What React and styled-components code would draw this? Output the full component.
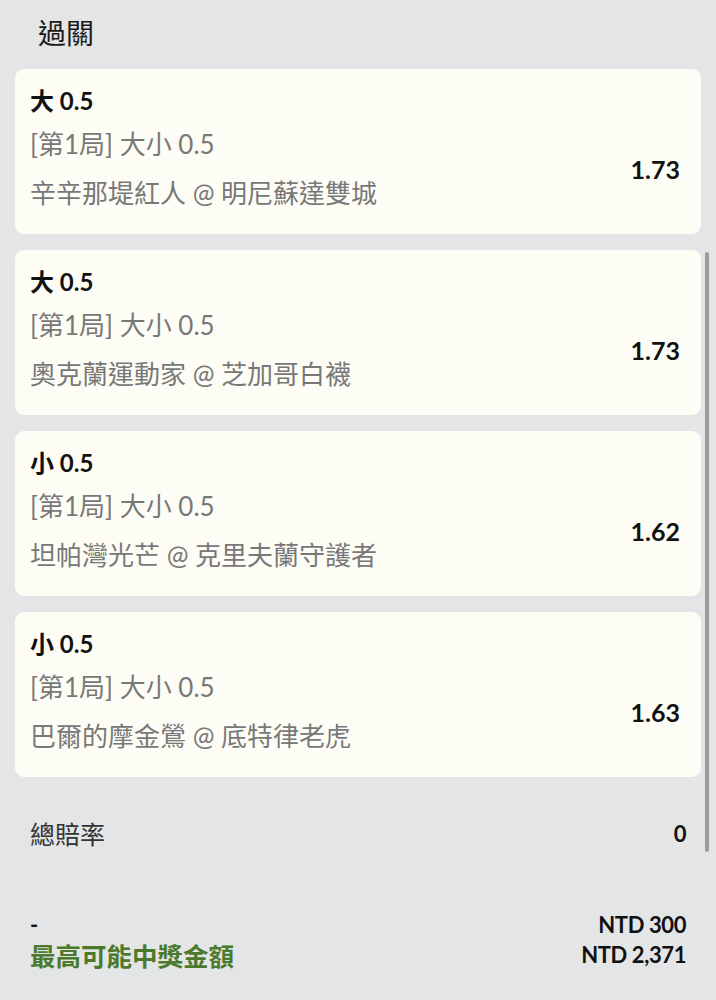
import React from 'react';
import styled, { createGlobalStyle } from 'styled-components';

const bets = [
  { pick: '大 0.5', market: '[第1局] 大小 0.5', match: '辛辛那堤紅人 @ 明尼蘇達雙城', odds: '1.73' },
  { pick: '大 0.5', market: '[第1局] 大小 0.5', match: '奧克蘭運動家 @ 芝加哥白襪', odds: '1.73' },
  { pick: '小 0.5', market: '[第1局] 大小 0.5', match: '坦帕灣光芒 @ 克里夫蘭守護者', odds: '1.62' },
  { pick: '小 0.5', market: '[第1局] 大小 0.5', match: '巴爾的摩金鶯 @ 底特律老虎', odds: '1.63' },
];

export default function App() {
  return (
    <>
      <GlobalStyle />
      <Page>
        <Title>過關</Title>
        <List>
          {bets.map((b, i) => (
            <Card key={i}>
              <Pick>{b.pick}</Pick>
              <Market>{b.market}</Market>
              <Match>{b.match}</Match>
              <Odds>{b.odds}</Odds>
            </Card>
          ))}
        </List>

        <TotalRow>
          <TotalLabel>總賠率</TotalLabel>
          <Amount>0</Amount>
        </TotalRow>

        <Summary>
          <SummaryLine>
            <Dash>-</Dash>
            <Amount>NTD 300</Amount>
          </SummaryLine>
          <SummaryLine>
            <WinLabel>最高可能中獎金額</WinLabel>
            <Amount>NTD 2,371</Amount>
          </SummaryLine>
        </Summary>

        <ScrollBar />
      </Page>
    </>
  );
}

const GlobalStyle = createGlobalStyle`
  html, body {
    margin: 0;
    padding: 0;
    background: #e4e5e7;
  }
  body {
    font-family: Lato, "Noto Sans CJK TC", sans-serif;
    color: #141414;
  }
`;

const Page = styled.div`
  position: relative;
  width: 716px;
  height: 1000px;
  overflow: hidden;
  background: #e4e5e7;
  padding: 14px 15px 0;
  box-sizing: border-box;
`;

const Title = styled.div`
  font-size: 28px;
  line-height: 38px;
  padding-left: 23px;
  color: #1a1a1a;
`;

const List = styled.div`
  display: flex;
  flex-direction: column;
  gap: 16px;
  margin-top: 17px;
`;

const Card = styled.div`
  display: grid;
  grid-template-columns: 1fr auto;
  grid-template-rows: 32px 44px 44px;
  row-gap: 5px;
  height: 165px;
  box-sizing: border-box;
  padding: 16px 21px 0 15px;
  background: #fdfdf5;
  border-radius: 9px;
`;

const Pick = styled.div`
  grid-column: 1;
  font-size: 24px;
  font-weight: 700;
  line-height: 32px;
  color: #111;
`;

const Market = styled.div`
  grid-column: 1;
  grid-row: 2;
  font-size: 26px;
  line-height: 44px;
  color: #787878;
`;

const Match = styled.div`
  grid-column: 1;
  grid-row: 3;
  font-size: 26px;
  line-height: 44px;
  color: #787878;
`;

const Odds = styled.div`
  grid-column: 2;
  grid-row: 2 / 4;
  align-self: center;
  font-size: 25px;
  font-weight: 700;
  color: #111;
`;

const TotalRow = styled.div`
  display: flex;
  justify-content: space-between;
  align-items: center;
  padding: 0 15px;
  margin-top: 40px;
  height: 32px;
`;

const TotalLabel = styled.div`
  font-size: 25px;
  color: #333;
`;

const Amount = styled.div`
  font-size: 22px;
  font-weight: 700;
  color: #111;
  letter-spacing: -0.4px;
`;

const Summary = styled.div`
  display: flex;
  flex-direction: column;
  padding: 0 15px;
  margin-top: 60px;
`;

const SummaryLine = styled.div`
  display: flex;
  justify-content: space-between;
  align-items: center;
  height: 30px;
`;

const Dash = styled.div`
  font-size: 22px;
  font-weight: 700;
  color: #111;
`;

const WinLabel = styled.div`
  font-size: 25.5px;
  font-weight: 700;
  color: #4c7a2c;
`;

const ScrollBar = styled.div`
  position: absolute;
  left: 705px;
  top: 252px;
  width: 4px;
  height: 600px;
  border-radius: 3px;
  background: #9c9c9c;
`;
